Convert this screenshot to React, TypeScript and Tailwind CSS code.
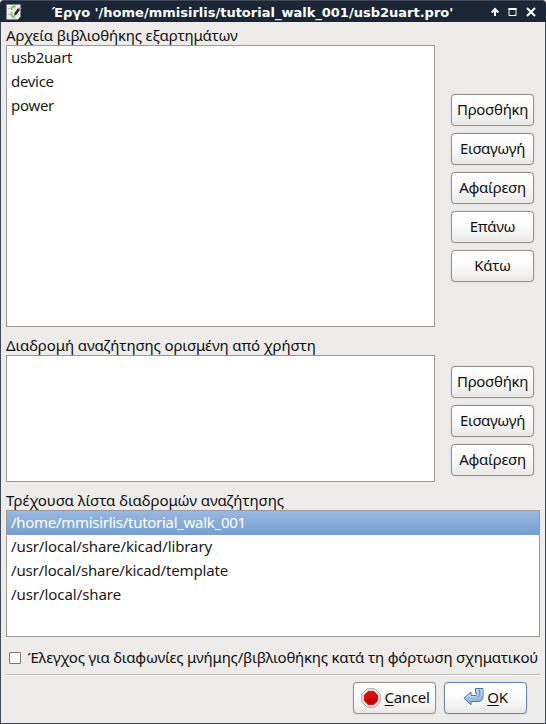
import type { ReactNode } from "react";

function Label({ children, spacing }: { children: ReactNode; spacing: string }) {
  return <div className={`h-[19px] whitespace-nowrap leading-[19px] ${spacing}`}>{children}</div>;
}

function Button({ children, primary }: { children: ReactNode; primary?: boolean }) {
  return (
    <button
      className={`flex h-8 w-[83px] shrink-0 items-center justify-center whitespace-nowrap rounded-[4px] border bg-linear-to-b from-white via-[#fafafa] to-[#e9e8e7] pb-0.5 tracking-[-0.3px] ${
        primary ? "border-[#6588b5] shadow-[0_0_1px_#6588b5]" : "border-[#93918e] shadow-[0_0_1px_#8b8987]"
      }`}
    >
      {children}
    </button>
  );
}

function AppIcon() {
  return (
    <svg width="16" height="16" viewBox="0 0 16 16" fill="none">
      <path d="M.5.5h14v12L12 15.5H.5z" fill="#eeeeec" />
      <path d="M1.5 4.5h4M7 2h2v3M6 14h4M1.5 10.5h4" stroke="#c3bfc8" />
      <path d="M9.5 2.5C6 2 5 3.5 6 6M6 8c-1.5 2.5-.5 4.5 2.5 5" stroke="#7ec45f" strokeWidth="1.8" />
      <path d="M13 5 9 10.5" stroke="#222c35" strokeWidth="2.6" />
      <path d="m8.5 11.5 1-1.5" stroke="#222c35" strokeWidth="1.2" />
      <path d="m13 5.5 2-2" stroke="#b285ae" strokeWidth="2.4" />
    </svg>
  );
}

function StopIcon() {
  return (
    <svg className="relative left-px top-px" width="20" height="20" viewBox="0 0 20 20">
      <path d="M6.2.8h7.6l5.4 5.4v7.6l-5.4 5.4H6.2L.8 13.8V6.2z" fill="#f0f0ee" stroke="#a0a29d" />
      <path d="M7.2 3.2h5.6l4 4v5.6l-4 4H7.2l-4-4V7.2z" fill="#cc0000" stroke="#b80000" strokeWidth=".5" />
      <path d="M7.4 3.8h5.2l3.6 3.6V10L3.8 11V7.4z" fill="#d60e0e" />
    </svg>
  );
}

function ReturnIcon() {
  return (
    <svg width="21" height="20" viewBox="0 0 21 20">
      <path
        d="M.9 11.2 8 5v3.5h4c1.4 0 2-.6 2-1.8V6h-1.5V1.5h7.5v7.8c0 3.4-1.8 5.2-5 5.2H8v3.3z"
        fill="#9bbde1"
        stroke="#4776ab"
        strokeLinejoin="round"
      />
      <path d="M2.6 11.2 7 7.4v2.2h5.5c1.8 0 2.6-1 2.6-2.6V5h-1.5V2.6H19v6.6" fill="none" stroke="#cfe1f4" strokeWidth=".9" />
      <path d="M16.5 2.5v4c0 2-.8 3-2.5 3.6" fill="none" stroke="#5f8cbd" strokeWidth="1" />
    </svg>
  );
}

const libraries = ["usb2uart", "device", "power"];
const searchPaths = [
  { path: "/home/mmisirlis/tutorial_walk_001", style: "bg-linear-to-b from-[#9ab8e2] to-[#759fd1] text-white tracking-[-0.29px]" },
  { path: "/usr/local/share/kicad/library", style: "tracking-[-0.1px]" },
  { path: "/usr/local/share/kicad/template", style: "tracking-[-0.17px]" },
  { path: "/usr/local/share", style: "tracking-[-0.06px]" },
];

export default function App() {
  return (
    <div className="flex h-[724px] w-[546px] flex-col overflow-hidden bg-[#edeceb] font-['Noto_Sans','Open_Sans',sans-serif] text-[15px] text-[#101010]">
      <header className="flex h-[22px] shrink-0 items-center rounded-t-[4px] border-t border-[#40495a] bg-[#1b2636] text-white">
        <div className="ml-1.5 w-[46px] shrink-0">
          <AppIcon />
        </div>
        <h1 className="grow whitespace-nowrap pt-[3px] font-['DejaVu_Sans',sans-serif] text-[13px] font-bold leading-[18px]">
          Έργο '/home/mmisirlis/tutorial_walk_001/usb2uart.pro'
        </h1>
        <svg className="mr-[9px] shrink-0" width="46" height="12" viewBox="0 0 46 12" fill="none" stroke="white" strokeWidth="2">
          <path d="M4 10V3M.7 6.5 4 3l3.3 3.5" />
          <path d="M18 2.5h7v7h-7z" strokeWidth="1" />
          <path d="M17.5 3h8" strokeWidth="2" />
          <path d="m36 2 8 8m0-8-8 8" />
        </svg>
      </header>
      <main className="flex grow flex-col border-x border-b border-[#414a59] pl-[5px]">
        <div className="flex h-[305px] shrink-0">
          <div className="w-[429px] pt-1">
            <Label spacing="tracking-[-0.17px]">Αρχεία βιβλιοθήκης εξαρτημάτων</Label>
            <div className="h-[282px] border border-[#9b9895] bg-white text-[#1a1a1a]">
              {libraries.map((name) => (
                <div key={name} className="h-6 pl-1 leading-[23px] tracking-[-0.3px]">{name}</div>
              ))}
            </div>
          </div>
          <div className="ml-4 flex flex-col gap-[7px] pt-[72px]">
            <Button>Προσθήκη</Button>
            <Button>Εισαγωγή</Button>
            <Button>Αφαίρεση</Button>
            <Button>Επάνω</Button>
            <Button>Κάτω</Button>
          </div>
        </div>
        <div className="flex h-[155px] shrink-0">
          <div className="w-[429px] pt-[9px]">
            <Label spacing="tracking-[-0.11px]">Διαδρομή αναζήτησης ορισμένη από χρήστη</Label>
            <div className="h-[127px] border border-[#9b9895] bg-white" />
          </div>
          <div className="ml-4 flex flex-col gap-[7px] pt-[39px]">
            <Button>Προσθήκη</Button>
            <Button>Εισαγωγή</Button>
            <Button>Αφαίρεση</Button>
          </div>
        </div>
        <div className="w-[534px] pt-[9px]">
          <Label spacing="tracking-[-0.07px]">Τρέχουσα λίστα διαδρομών αναζήτησης</Label>
          <div className="h-[127px] border border-[#9b9895] bg-white text-[#1a1a1a]">
            {searchPaths.map(({ path, style }) => (
              <div key={path} className={`h-6 pl-1 leading-[23px] ${style}`}>
                {path}
              </div>
            ))}
          </div>
        </div>
        <label className="ml-[3px] mt-[11px] flex h-5 items-center gap-[7px] whitespace-nowrap">
          <span className="size-3 shrink-0 rounded-[1px] border border-[#777570] bg-white" />
          <span className="pb-0.5 tracking-[-0.21px]">Έλεγχος για διαφωνίες μνήμης/βιβλιοθήκης κατά τη φόρτωση σχηματικού</span>
        </label>
        <hr className="mt-[6px] h-0.5 w-[534px] border-b border-t border-b-white border-t-[#bebcb9]" />
        <div className="mt-[6px] flex justify-end gap-2 pr-[18px]">
          <Button>
            <StopIcon />
            <span className="ml-[5px]"><u className="underline-offset-2">C</u>ancel</span>
          </Button>
          <Button primary>
            <ReturnIcon />
            <span className="ml-[3px]"><u className="underline-offset-2">O</u>K</span>
          </Button>
        </div>
      </main>
    </div>
  );
}
